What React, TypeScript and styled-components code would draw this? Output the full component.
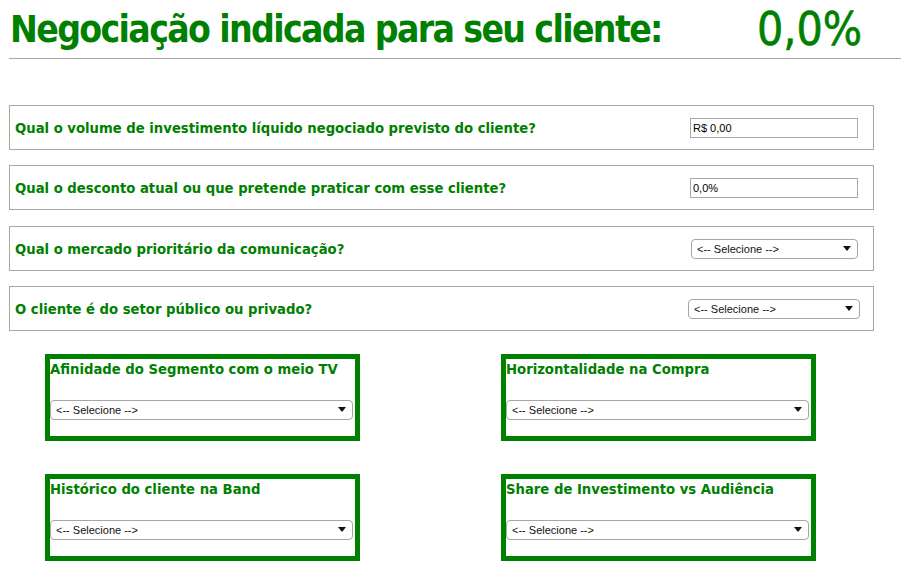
import React from 'react';
import styled, { createGlobalStyle } from 'styled-components';

const GlobalStyle = createGlobalStyle`
  body {
    margin: 0;
    background: #ffffff;
    font-family: 'DejaVu Sans Condensed', 'DejaVu Sans', Verdana, sans-serif;
  }
`;

const Page = styled.div`
  width: 892px;
  padding-left: 9px;
`;

const Header = styled.div`
  display: flex;
  align-items: center;
  height: 58px;
  border-bottom: 1px solid #aaaaaa;
`;

const Title = styled.h1`
  margin: 0 0 0 1px;
  font-size: 37px;
  font-weight: bold;
  color: #008000;
  letter-spacing: -1.65px;
  white-space: nowrap;
  width: 747px;
`;

const Result = styled.div`
  font-size: 46px;
  color: #008000;
  white-space: nowrap;
  -webkit-text-stroke: 0.6px #008000;
`;

const Questions = styled.div`
  display: flex;
  flex-direction: column;
  gap: 15.3px;
  margin-top: 46px;
  width: 865px;
`;

const QuestionRow = styled.div`
  display: flex;
  align-items: center;
  justify-content: space-between;
  height: 43px;
  border: 1px solid #a8a89c;
  padding-left: 5px;
`;

const QuestionText = styled.span`
  font-size: 14.7px;
  font-weight: bold;
  color: #008000;
`;

const TextInput = styled.input<{ $right: number }>`
  width: 168px;
  height: 20px;
  box-sizing: border-box;
  margin-right: ${p => p.$right}px;
  border: 1px solid #a9a9a9;
  padding: 1px 2px;
  font-family: 'Liberation Sans', Arial, sans-serif;
  font-size: 11px;
  color: #000;
  outline: none;
`;

const SelectWrap = styled.div<{ $width: number; $right?: number }>`
  position: relative;
  width: ${p => p.$width}px;
  margin-right: ${p => p.$right ?? 0}px;
  &::after {
    content: '';
    position: absolute;
    right: 7px;
    top: 8px;
    border-left: 4px solid transparent;
    border-right: 4px solid transparent;
    border-top: 5px solid #111;
    pointer-events: none;
  }
`;

const Select = styled.select`
  appearance: none;
  width: 100%;
  height: 20px;
  box-sizing: border-box;
  border: 1px solid #a6a6a6;
  border-radius: 4px;
  background: #fff;
  padding: 0 0 0 5px;
  font-family: 'Liberation Sans', Arial, sans-serif;
  font-size: 11px;
  color: #111;
  outline: none;
`;

const Criteria = styled.div`
  display: grid;
  grid-template-columns: 315px 315px;
  column-gap: 141px;
  row-gap: 33px;
  margin: 23px 0 0 36px;
`;

const CriteriaBox = styled.div`
  height: 87px;
  box-sizing: border-box;
  border: 5px solid #008000;
  display: flex;
  flex-direction: column;
`;

const CriteriaTitle = styled.h3`
  margin: 1px 0 0 0;
  height: 19px;
  font-size: 14.7px;
  font-weight: bold;
  color: #008000;
  white-space: nowrap;
`;

const CriteriaSelect = styled.div`
  margin-top: 20px;
`;

const questions = [
  { text: 'Qual o volume de investimento líquido negociado previsto do cliente?', kind: 'input', value: 'R$ 0,00' },
  { text: 'Qual o desconto atual ou que pretende praticar com esse cliente?', kind: 'input', value: '0,0%' },
  { text: 'Qual o mercado prioritário da comunicação?', kind: 'select', width: 167, right: 15 },
  { text: 'O cliente é do setor público ou privado?', kind: 'select', width: 172, right: 13 },
];

const criteria = [
  'Afinidade do Segmento com o meio TV',
  'Horizontalidade na Compra',
  'Histórico do cliente na Band',
  'Share de Investimento vs Audiência',
];

const Selecione: React.FC = () => (
  <Select defaultValue="">
    <option value="">{'<-- Selecione -->'}</option>
  </Select>
);

export default function App() {
  return (
    <Page>
      <GlobalStyle />
      <Header>
        <Title>Negociação indicada para seu cliente:</Title>
        <Result>0,0%</Result>
      </Header>
      <Questions>
        {questions.map(q => (
          <QuestionRow key={q.text}>
            <QuestionText>{q.text}</QuestionText>
            {q.kind === 'input' ? (
              <TextInput $right={15} defaultValue={q.value} />
            ) : (
              <SelectWrap $width={q.width!} $right={q.right}>
                <Selecione />
              </SelectWrap>
            )}
          </QuestionRow>
        ))}
      </Questions>
      <Criteria>
        {criteria.map(c => (
          <CriteriaBox key={c}>
            <CriteriaTitle>{c}</CriteriaTitle>
            <CriteriaSelect>
              <SelectWrap $width={303}>
                <Selecione />
              </SelectWrap>
            </CriteriaSelect>
          </CriteriaBox>
        ))}
      </Criteria>
    </Page>
  );
}
